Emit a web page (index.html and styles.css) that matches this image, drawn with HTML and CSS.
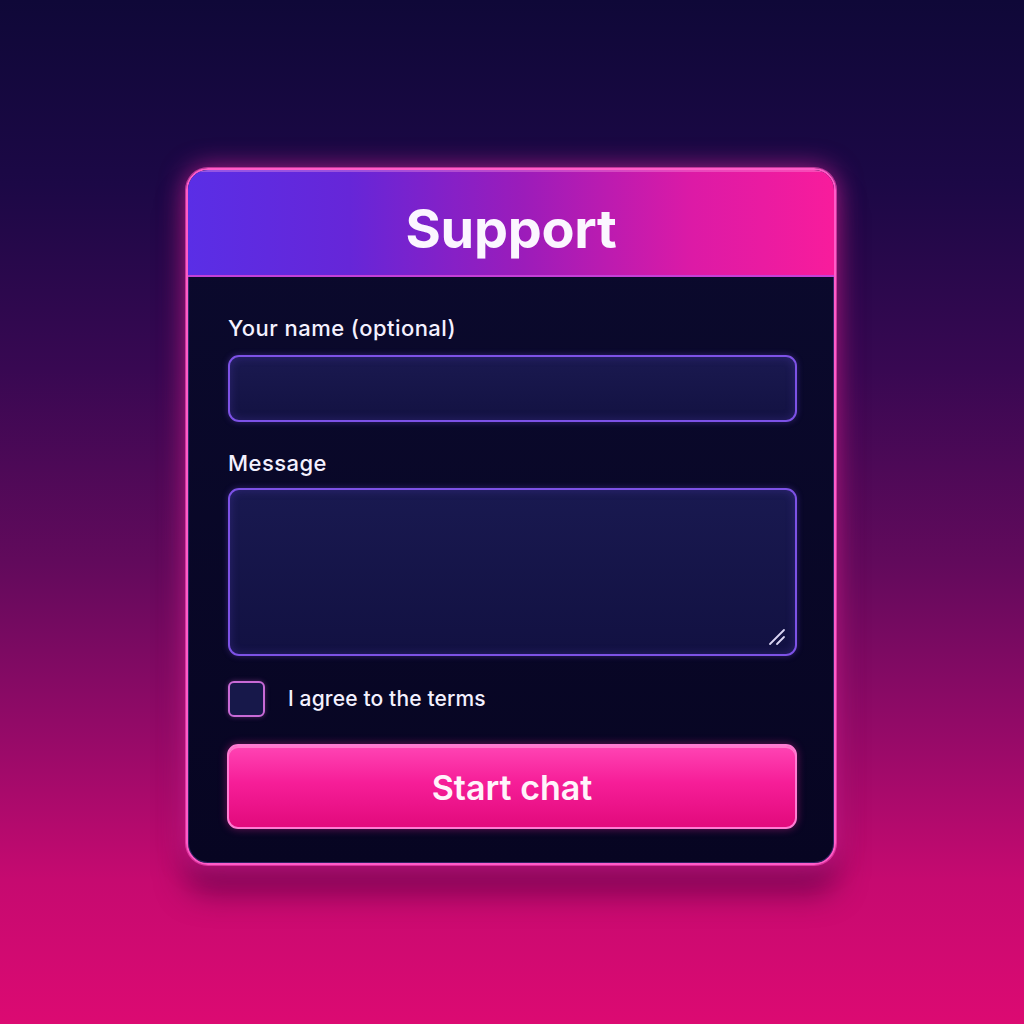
FILE: index.html
```html
<!DOCTYPE html>
<html lang="en">
<head>
<meta charset="utf-8">
<title>Support</title>
<link rel="stylesheet" href="styles.css">
</head>
<body>
<main class="stage">
  <section class="card">
    <header class="card-header">
      <h1 class="title">Support</h1>
    </header>
    <form class="card-body">
      <label class="label" for="name">Your name (optional)</label>
      <input class="field" id="name" type="text">
      <label class="label label-msg" for="msg">Message</label>
      <div class="area-wrap">
        <textarea class="field area" id="msg"></textarea>
        <svg class="grip" width="20" height="20" viewBox="0 0 20 20" aria-hidden="true">
          <line x1="3" y1="17" x2="17" y2="3" stroke="#d9d4f2" stroke-width="1.8" stroke-linecap="round"/>
          <line x1="10" y1="17" x2="17" y2="10" stroke="#d9d4f2" stroke-width="1.8" stroke-linecap="round"/>
        </svg>
      </div>
      <label class="check-row">
        <span class="box"></span>
        <span class="check-text">I agree to the terms</span>
      </label>
      <button class="btn" type="button">Start chat</button>
    </form>
  </section>
</main>
</body>
</html>
```

FILE: styles.css
```css
* { box-sizing: border-box; }
html, body { margin: 0; padding: 0; }
body {
  width: 1024px;
  height: 1024px;
  overflow: hidden;
  font-family: Inter, "Noto Sans", sans-serif;
  background: linear-gradient(180deg, #0f0838 0%, #1c0846 18%, #380852 36%, #620a5c 55%, #960a68 72%, #c60a70 86%, #dc0a72 100%);
  color: #fff;
}
.stage {
  padding-top: 168px;
  display: flex;
  justify-content: center;
}
.card {
  width: 650px;
  margin-left: -2px;
  border: 2px solid #ff5cc8;
  border-radius: 22px;
  background: linear-gradient(180deg, #0b0a2e 0%, #070522 100%);
  box-shadow: 0 0 0 1px rgba(255, 80, 190, 0.6), 0 0 26px rgba(255, 40, 170, 0.65), 0 28px 30px rgba(70, 0, 60, 0.55), inset 0 0 0 1px rgba(120, 90, 220, 0.35);
  overflow: hidden;
}
.card-header {
  height: 107px;
  display: flex;
  align-items: center;
  justify-content: center;
  background: linear-gradient(90deg, #5a2ee6 0%, #6626d8 25%, #9c1cba 52%, #dc1aa6 78%, #f81c9c 100%);
  border-bottom: 2px solid #c340d6;
  box-shadow: inset 0 2px 0 rgba(255, 160, 230, 0.35);
}
.title {
  margin: 0;
  font-size: 54px;
  font-weight: 700;
  letter-spacing: -0.3px;
  color: #fbf6ff;
  line-height: 1;
  padding-top: 12px;
}
.card-body {
  display: flex;
  flex-direction: column;
  padding: 39px 37px 34px 40px;
}
.label {
  font-size: 22px;
  font-weight: 500;
  letter-spacing: 0.45px;
  line-height: 24px;
  color: #f4f1ff;
  margin-bottom: 15px;
}
.label-msg {
  margin-top: 29px;
  margin-bottom: 13px;
}
.field {
  display: block;
  width: 100%;
  height: 67px;
  border: 2px solid #7d52e6;
  border-radius: 11px;
  background: linear-gradient(180deg, #1a1950 0%, #131242 100%);
  box-shadow: inset 0 0 10px rgba(110, 80, 230, 0.25), 0 0 6px rgba(120, 80, 230, 0.35);
  outline: none;
  color: #fff;
  font: inherit;
  padding: 0 16px;
}
.area-wrap {
  position: relative;
}
.area {
  height: 168px;
  resize: none;
  background: linear-gradient(180deg, #191950 0%, #121142 100%);
}
.grip {
  position: absolute;
  right: 10px;
  bottom: 9px;
}
.check-row {
  margin-top: 25px;
  display: flex;
  align-items: center;
  height: 36px;
}
.box {
  width: 37px;
  height: 36px;
  border: 2px solid #c86ad6;
  border-radius: 6px;
  background: #17184a;
  box-shadow: 0 0 5px rgba(220, 100, 220, 0.35);
  flex: none;
}
.check-text {
  margin-left: 23px;
  font-size: 21px;
  font-weight: 500;
  letter-spacing: 0.15px;
  color: #f4f1ff;
  padding-bottom: 2px;
}
.btn {
  margin-top: 27px;
  margin-left: -1px;
  height: 85px;
  width: calc(100% + 1px);
  border: 2px solid #ff7cd2;
  border-radius: 11px;
  background: linear-gradient(180deg, #ff44b4 0%, #f61e98 45%, #e20a7c 100%);
  box-shadow: inset 0 2px 0 rgba(255, 190, 235, 0.45), 0 0 8px rgba(255, 40, 160, 0.4);
  color: #fff4fb;
  font-family: Inter, "Noto Sans", sans-serif;
  font-size: 34px;
  font-weight: 600;
  cursor: pointer;
  padding: 2px 0 0;
}
```
